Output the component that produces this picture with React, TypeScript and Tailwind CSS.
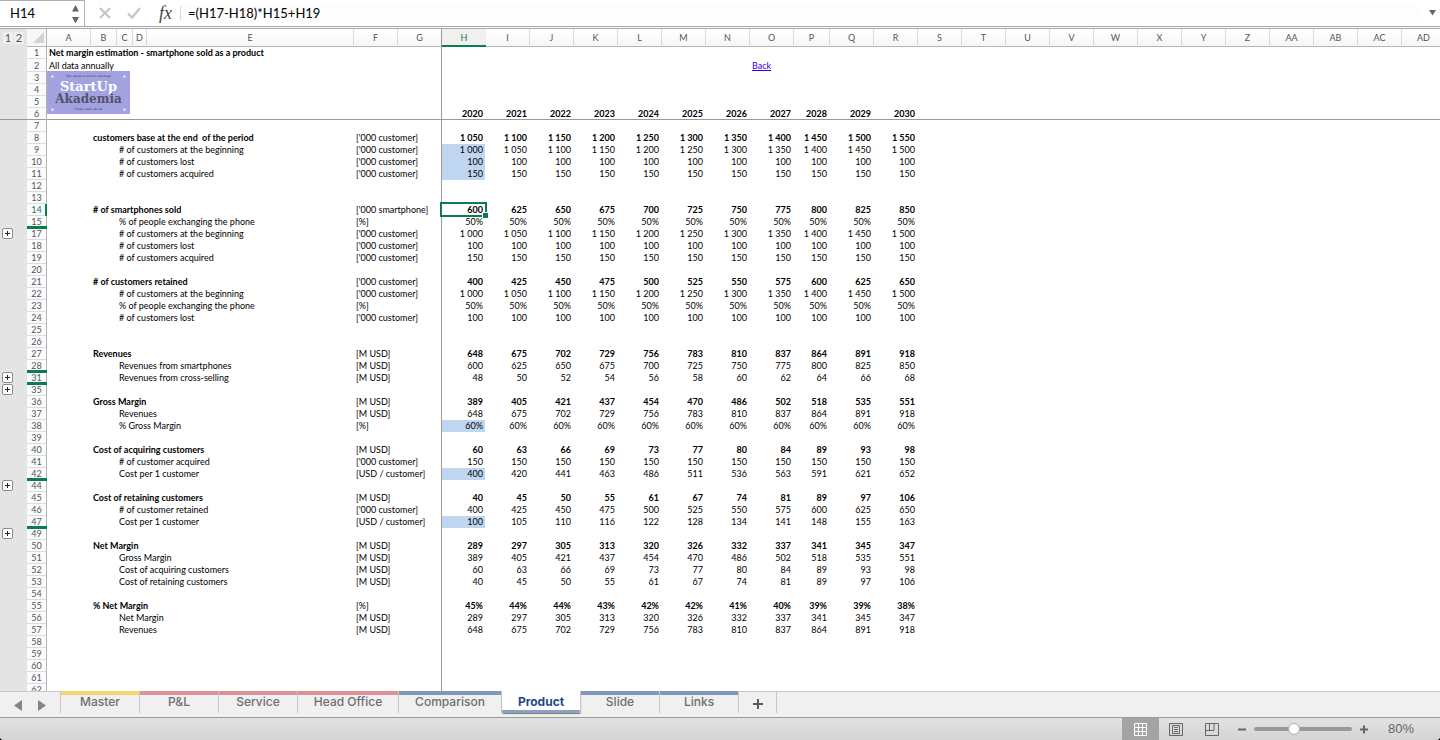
import React from "react";

type Col = { name: string; cls: string };

const COLS: Col[] = [
  { name: "A", cls: "w-[44px]" },
  { name: "B", cls: "w-[26px]" },
  { name: "C", cls: "w-[16px]" },
  { name: "D", cls: "w-[14px]" },
  { name: "E", cls: "w-[207px]" },
  { name: "F", cls: "w-[44px]" },
  { name: "G", cls: "w-[44px]" },
  ...["H", "I", "J", "K", "L", "M", "N", "O"].map((name) => ({ name, cls: "w-[44px]" })),
  { name: "P", cls: "w-[36px]" },
  ...["Q", "R", "S", "T", "U", "V", "W", "X", "Y", "Z", "AA", "AB", "AC", "AD"].map((name) => ({
    name,
    cls: "w-[44px]",
  })),
];

type Line = { label: string; unit: string; values: string[]; bold?: boolean; input?: boolean };

const list = (s: string) => s.split(",");
const BASE = list("1 050,1 100,1 150,1 200,1 250,1 300,1 350,1 400,1 450,1 500,1 550");
const START = list("1 000,1 050,1 100,1 150,1 200,1 250,1 300,1 350,1 400,1 450,1 500");
const same = (v: string) => Array<string>(11).fill(v);
const SOLD = list("600,625,650,675,700,725,750,775,800,825,850");
const RETAINED = list("400,425,450,475,500,525,550,575,600,625,650");
const REVENUES = list("648,675,702,729,756,783,810,837,864,891,918");
const GROSS = list("389,405,421,437,454,470,486,502,518,535,551");
const ACQ = list("60,63,66,69,73,77,80,84,89,93,98");
const RET = list("40,45,50,55,61,67,74,81,89,97,106");
const NET = list("289,297,305,313,320,326,332,337,341,345,347");

const CUST = "['000 customer]";
const MUSD = "[M USD]";
const PER = "[USD / customer]";

const LINES: Record<number, Line> = {
  6: { label: "", unit: "", values: list("2020,2021,2022,2023,2024,2025,2026,2027,2028,2029,2030"), bold: true },
  8: { label: "customers base at the end  of the period", unit: CUST, values: BASE, bold: true },
  9: { label: "# of customers at the beginning", unit: CUST, values: START, input: true },
  10: { label: "# of customers lost", unit: CUST, values: same("100"), input: true },
  11: { label: "# of customers acquired", unit: CUST, values: same("150"), input: true },
  14: { label: "# of smartphones sold", unit: "['000 smartphone]", values: SOLD, bold: true },
  15: { label: "% of people exchanging the phone", unit: "[%]", values: same("50%") },
  17: { label: "# of customers at the beginning", unit: CUST, values: START },
  18: { label: "# of customers lost", unit: CUST, values: same("100") },
  19: { label: "# of customers acquired", unit: CUST, values: same("150") },
  21: { label: "# of customers retained", unit: CUST, values: RETAINED, bold: true },
  22: { label: "# of customers at the beginning", unit: CUST, values: START },
  23: { label: "% of people exchanging the phone", unit: "[%]", values: same("50%") },
  24: { label: "# of customers lost", unit: CUST, values: same("100") },
  27: { label: "Revenues", unit: MUSD, values: REVENUES, bold: true },
  28: { label: "Revenues from smartphones", unit: MUSD, values: SOLD },
  31: { label: "Revenues from cross-selling", unit: MUSD, values: list("48,50,52,54,56,58,60,62,64,66,68") },
  36: { label: "Gross Margin", unit: MUSD, values: GROSS, bold: true },
  37: { label: "Revenues", unit: MUSD, values: REVENUES },
  38: { label: "% Gross Margin", unit: "[%]", values: same("60%"), input: true },
  40: { label: "Cost of acquiring customers", unit: MUSD, values: ACQ, bold: true },
  41: { label: "# of customer acquired", unit: CUST, values: same("150") },
  42: { label: "Cost per 1 customer", unit: PER, values: list("400,420,441,463,486,511,536,563,591,621,652"), input: true },
  45: { label: "Cost of retaining customers", unit: MUSD, values: RET, bold: true },
  46: { label: "# of customer retained", unit: CUST, values: RETAINED },
  47: { label: "Cost per 1 customer", unit: PER, values: list("100,105,110,116,122,128,134,141,148,155,163"), input: true },
  50: { label: "Net Margin", unit: MUSD, values: NET, bold: true },
  51: { label: "Gross Margin", unit: MUSD, values: GROSS },
  52: { label: "Cost of acquiring customers", unit: MUSD, values: ACQ },
  53: { label: "Cost of retaining customers", unit: MUSD, values: RET },
  55: { label: "% Net Margin", unit: "[%]", values: list("45%,44%,44%,43%,42%,42%,41%,40%,39%,39%,38%"), bold: true },
  56: { label: "Net Margin", unit: MUSD, values: NET },
  57: { label: "Revenues", unit: MUSD, values: REVENUES },
};

const HIDDEN = [16, 29, 30, 32, 33, 34, 43, 48];
const ROWS = Array.from({ length: 62 }, (_, i) => i + 1).filter((n) => !HIDDEN.includes(n));
const EXPANDERS = [17, 31, 35, 44, 49];

const FREEZE = "border-r border-[#999]";

function Logo() {
  return (
    <div className="absolute top-0 left-0 z-10 flex h-[43px] w-[83px] flex-col items-center bg-[#a3a2e0] text-center">
      <svg className="absolute inset-0 h-full w-full" viewBox="0 0 83 43" aria-hidden="true">
        <g fill="#e9e8fb">
          <circle cx="5.500" cy="5.500" r="1.200" />
          <circle cx="77.500" cy="5.500" r="1.200" />
          <circle cx="5.500" cy="38.500" r="1.200" />
          <circle cx="77.500" cy="38.500" r="1.200" />
        </g>
      </svg>
      <span className="mt-[3px] font-['DejaVu_Serif'] text-[3px] leading-[4px] font-bold text-[#5c5a80]">
        The must-read for startups
      </span>
      <span className="mt-[2px] font-['DejaVu_Serif'] text-[13px] leading-[13px] font-bold text-white">StartUp</span>
      <span className="font-['DejaVu_Serif'] text-[12px] leading-[12px] font-bold text-[#55536b]">Akademia</span>
      <span className="mt-[2px] font-['DejaVu_Serif'] text-[3px] leading-[4px] font-bold text-[#5c5a80]">
        Come and check
      </span>
    </div>
  );
}

function Gutter({ n }: { n: number }) {
  return (
    <td className={`relative bg-[#e4e4e4] ${n === 6 ? "shadow-[inset_0_-1px_#999]" : ""}`}>
      {EXPANDERS.includes(n) && (
        <button
          type="button"
          aria-label={`Expand rows above ${n}`}
          className="absolute top-0 left-[2px] flex h-[11px] w-[11px] items-center justify-center rounded-[2px] border border-[#8c8c8c] bg-white"
        >
          <svg width="7" height="7" viewBox="0 0 7 7" aria-hidden="true">
            <path d="M3 1h1v2h2v1H4v2H3V4H1V3h2z" fill="#222" />
          </svg>
        </button>
      )}
    </td>
  );
}

function RowHead({ n }: { n: number }) {
  const active = n === 14;
  const gap = HIDDEN.includes(n + 1);
  return (
    <th
      scope="row"
      className={`relative border-r border-[#b4b4b4] bg-[#fafbfc] text-center font-normal ${
        active ? "text-[#0b7d4b]" : "text-[#555]"
      }`}
    >
      <div
        className={`border-b ${n === 2 ? "h-[13px] leading-[13px]" : "h-[12px] leading-[12px]"} ${
          n === 6 ? "border-[#999]" : "border-[#dcdcdc]"
        }`}
      >
        {n}
      </div>
      {active && <span className="absolute top-0 -right-px h-[12px] w-[2px] bg-[#0b7d4b]" />}
      {gap && <span className="absolute -right-px -bottom-px left-0 z-10 h-[3px] bg-[#0b7d4b]" />}
    </th>
  );
}

function Row({ n }: { n: number }) {
  const line = LINES[n];
  const height = n === 2 ? "h-[13px]" : "h-[12px]";
  const edge = n === 6 ? "shadow-[inset_0_-1px_#999]" : "";
  if (n <= 2) {
    return (
      <tr className={height}>
        <Gutter n={n} />
        <RowHead n={n} />
        <td colSpan={7} className={`${FREEZE} pl-[2px] text-left ${n === 1 ? "font-bold" : ""}`}>
          {n === 1 ? "Net margin estimation - smartphone sold as a product" : "All data annually"}
        </td>
        <td colSpan={7} />
        <td colSpan={16} className="pl-[2px] text-left">
          {n === 2 && (
            <a href="#back" className="text-[#3300e6] underline">
              Back
            </a>
          )}
        </td>
      </tr>
    );
  }
  if (!line) {
    return (
      <tr className={height}>
        <Gutter n={n} />
        <RowHead n={n} />
        <td colSpan={7} className={`relative ${FREEZE}`}>
          {n === 3 && (
            <div className="absolute -top-px left-0">
              <Logo />
            </div>
          )}
        </td>
        <td colSpan={23} />
      </tr>
    );
  }
  return (
    <tr className={`${height} ${line.bold ? "font-bold" : ""}`}>
      <Gutter n={n} />
      <RowHead n={n} />
      <td colSpan={line.bold ? 1 : 2} className={edge} />
      <td colSpan={line.bold ? 4 : 3} className={`${edge} pl-[2px] text-left whitespace-pre`}>
        {line.label}
      </td>
      <td colSpan={2} className={`${edge} ${FREEZE} pl-[2px] text-left font-normal`}>
        {line.unit}
      </td>
      {line.values.map((v, i) => (
        <td
          key={i}
          className={`${edge} relative text-right ${
            line.input && i === 0 ? "border-r border-white bg-[#c0d5f0] pr-[2px]" : "pr-[3px]"
          }`}
        >
          {v}
          {n === 14 && i === 0 && (
            <span className="absolute -top-[2px] -right-px -bottom-px -left-[2px] border-2 border-[#0b7d4b]">
              <span className="absolute -right-[3px] -bottom-[3px] h-[6px] w-[6px] border-t border-l border-white bg-[#0b7d4b]" />
            </span>
          )}
        </td>
      ))}
      <td colSpan={12} className={edge} />
    </tr>
  );
}

function FormulaBar() {
  return (
    <header className="flex h-[27px] shrink-0 items-stretch border-b border-[#a6a6a6] bg-white font-['Lato',sans-serif] text-[13px] text-black">
      <div className="flex w-[85px] items-center border-t border-r border-[#b0b0b0] pr-[4px] pl-[10px]">
        <input aria-label="Name box" defaultValue="H14" className="w-0 flex-1 bg-transparent pt-px outline-none" />
        <svg width="9" height="20" viewBox="0 0 9 20" aria-hidden="true" fill="#666">
          <path d="M4.500 1 8 7.500H1zM4.500 19.500 1 13h7z" />
        </svg>
      </div>
      <div className="flex w-[95px] items-center">
        <button type="button" aria-label="Cancel" className="ml-[14px]">
          <svg width="12" height="12" viewBox="0 0 12 12" aria-hidden="true">
            <path d="M1 1l10 10M11 1 1 11" stroke="#c4c4c4" strokeWidth="2" fill="none" />
          </svg>
        </button>
        <button type="button" aria-label="Enter" className="ml-[16px]">
          <svg width="14" height="12" viewBox="0 0 14 12" aria-hidden="true">
            <path d="M1 6.500l4 4L13 1" stroke="#c4c4c4" strokeWidth="2.200" fill="none" />
          </svg>
        </button>
        <button
          type="button"
          aria-label="Insert function"
          className="ml-[18px] font-['Liberation_Serif',serif] text-[18px] leading-[20px] text-[#444] italic"
        >
          fx
        </button>
      </div>
      <div className="my-[6px] w-px bg-[#d8d8d8]" />
      <input
        aria-label="Formula"
        defaultValue="=(H17-H18)*H15+H19"
        className="mt-[5px] mb-[3px] w-0 flex-1 bg-[#fdfdfd] pl-[7px] outline-none"
      />
      <button type="button" aria-label="Expand formula bar" className="flex w-[22px] items-center justify-end pr-[4px]">
        <svg width="7" height="6" viewBox="0 0 7 6" aria-hidden="true">
          <path d="M0 0h7L3.500 5.500z" fill="#666" />
        </svg>
      </button>
    </header>
  );
}

const TABS = [
  { name: "Master", color: "bg-[#f6d473]", w: "w-[79px]" },
  { name: "P&L", color: "bg-[#dd9296]", w: "w-[79px]" },
  { name: "Service", color: "bg-[#dd9296]", w: "w-[79px]" },
  { name: "Head Office", color: "bg-[#dd9296]", w: "w-[101px]" },
  { name: "Comparison", color: "bg-[#8198b8]", w: "w-[103px]" },
  { name: "Product", color: "bg-[#8ba1c4]", w: "w-[79px]", active: true },
  { name: "Slide", color: "bg-[#8198b8]", w: "w-[79px]" },
  { name: "Links", color: "bg-[#8198b8]", w: "w-[79px]" },
];

function SheetTabs() {
  return (
    <nav
      aria-label="Sheets"
      className="flex h-[26px] shrink-0 items-start border-t border-[#c8c8c8] bg-[#f0f0f0] font-['Inter',sans-serif] text-[12px] font-medium text-[#6e6e6e]"
    >
      <div className="flex h-[21px] w-[61px] items-end gap-[16px] border-r border-[#c8c8c8] pb-[2px] pl-[14px]">
        <button type="button" aria-label="Previous sheet">
          <svg width="8" height="11" viewBox="0 0 8 11" aria-hidden="true">
            <path d="M8 0v11L0 5.500z" fill="#858585" />
          </svg>
        </button>
        <button type="button" aria-label="Next sheet">
          <svg width="8" height="11" viewBox="0 0 8 11" aria-hidden="true">
            <path d="M0 0v11l8-5.500z" fill="#858585" />
          </svg>
        </button>
      </div>
      {TABS.map((t) =>
        t.active ? (
          <button
            key={t.name}
            type="button"
            aria-current="page"
            className={`${t.w} -mt-px flex h-[22px] flex-col rounded-b-[2px] border-r border-[#c8c8c8] bg-white font-bold text-[#204a87] shadow-[0_1px_1px_#777]`}
          >
            <span className="flex h-[19px] w-full items-center justify-center pt-[2px]">{t.name}</span>
            <span className={`h-[3px] w-full rounded-b-[2px] ${t.color}`} />
          </button>
        ) : (
          <button
            key={t.name}
            type="button"
            className={`${t.w} -mt-px flex h-[22px] flex-col border-r border-[#c8c8c8]`}
          >
            <span className={`h-[4px] w-full ${t.color}`} />
            <span className="flex h-[14px] w-full items-center justify-center">{t.name}</span>
          </button>
        ),
      )}
      <button
        type="button"
        aria-label="Add sheet"
        className="flex h-[21px] w-[38px] items-center justify-center border-r border-[#c8c8c8] pt-[3px]"
      >
        <svg width="10" height="10" viewBox="0 0 10 10" aria-hidden="true">
          <path d="M4 0h2v4h4v2H6v4H4V6H0V4h4z" fill="#5c5c5c" />
        </svg>
      </button>
    </nav>
  );
}

function StatusBar() {
  return (
    <footer className="flex h-[23px] shrink-0 items-center justify-end border-t border-[#9a9a9a] bg-linear-to-b from-[#e2e2e2] to-[#d4d4d4] font-['Liberation_Sans',sans-serif] text-[13px] text-[#666]">
      <button
        type="button"
        aria-label="Normal view"
        className="flex h-full w-[37px] items-center justify-center bg-[#a3a3a3]"
      >
        <svg width="13" height="13" viewBox="0 0 13 13" aria-hidden="true">
          <path d="M.5.5h12v12H.5zM4.500 0v13M8.500 0v13M0 4.500h13M0 8.500h13" stroke="#fff" fill="none" />
        </svg>
      </button>
      <button type="button" aria-label="Page layout view" className="ml-[10px]">
        <svg width="14" height="13" viewBox="0 0 14 13" aria-hidden="true">
          <path d="M.5.5h13v12H.5zM3.500 2.500h7v8h-7zM5 4.500h4M5 6.500h4M5 8.500h4" stroke="#666" fill="none" />
        </svg>
      </button>
      <button type="button" aria-label="Page break view" className="ml-[22px]">
        <svg width="14" height="13" viewBox="0 0 14 13" aria-hidden="true">
          <path d="M.5.5h13v12H.5zM.5 7.500h8.500V.5M4.500.5v7" stroke="#666" fill="none" />
        </svg>
      </button>
      <button type="button" aria-label="Zoom out" className="ml-[19px]">
        <svg width="8" height="9" viewBox="0 0 8 9" aria-hidden="true">
          <path d="M0 3.500h8v2H0z" fill="#666" />
        </svg>
      </button>
      <input
        type="range"
        aria-label="Zoom"
        min={0}
        max={100}
        defaultValue={39}
        className="ml-[8px] h-[12px] w-[98px] appearance-none bg-transparent [&::-webkit-slider-runnable-track]:h-[4px] [&::-webkit-slider-runnable-track]:rounded-full [&::-webkit-slider-runnable-track]:bg-[#999] [&::-webkit-slider-thumb]:-mt-[4px] [&::-webkit-slider-thumb]:h-[12px] [&::-webkit-slider-thumb]:w-[12px] [&::-webkit-slider-thumb]:appearance-none [&::-webkit-slider-thumb]:rounded-full [&::-webkit-slider-thumb]:border [&::-webkit-slider-thumb]:border-[#aaa] [&::-webkit-slider-thumb]:bg-white"
      />
      <button type="button" aria-label="Zoom in" className="ml-[8px]">
        <svg width="8" height="9" viewBox="0 0 8 9" aria-hidden="true">
          <path d="M3 .5h2v3h3v2H5v3H3v-3H0v-2h3z" fill="#666" />
        </svg>
      </button>
      <output className="ml-[20px] w-[52px]">80%</output>
    </footer>
  );
}

export default function App() {
  return (
    <div className="h-screen bg-black">
      <div className="flex h-full flex-col overflow-hidden rounded-b-[4px] bg-white">
        <FormulaBar />
        <main className="mt-px min-h-0 flex-1 overflow-hidden border-t border-[#a6a6a6] font-['Lato',sans-serif] text-[9px] leading-[12px] text-black">
          <table className="w-[1446px] table-fixed border-separate border-spacing-0 whitespace-nowrap [&_td]:py-0 [&_th]:p-0">
            <colgroup>
              <col className="w-[27px]" />
              <col className="w-[20px]" />
              {COLS.map((c) => (
                <col key={c.name} className={c.cls} />
              ))}
            </colgroup>
            <thead>
              <tr className="h-[18px]">
                <td className="bg-[#e4e4e4]">
                  <div className="flex gap-px pl-[3px] text-[11px] text-[#555]">
                    <button type="button" className="w-[10px] bg-[#efefef]">
                      1
                    </button>
                    <button type="button" className="w-[10px] bg-[#efefef]">
                      2
                    </button>
                  </div>
                </td>
                <td className="border-r border-b border-[#b4b4b4] bg-[#f7f7f7]">
                  <svg className="ml-[6px]" width="11" height="11" viewBox="0 0 11 11" aria-hidden="true">
                    <path d="M11 0v11H0z" fill="#d2d2d2" />
                  </svg>
                </td>
                {COLS.map((c) => (
                  <th
                    key={c.name}
                    scope="col"
                    className={
                      c.name === "H"
                        ? "border-b border-[#0b7d4b] bg-[#f0f0f0] text-center font-normal text-[#0b7d4b] shadow-[inset_0_-1px_#0b7d4b]"
                        : c.name === "G"
                          ? "border-r border-b border-r-[#999] border-b-[#b4b4b4] bg-linear-to-b from-white to-[#f6f6f6] text-center font-normal text-[#555]"
                          : "border-r border-b border-r-[#dadada] border-b-[#b4b4b4] bg-linear-to-b from-white to-[#f6f6f6] text-center font-normal text-[#555]"
                    }
                  >
                    {c.name}
                  </th>
                ))}
              </tr>
            </thead>
            <tbody>
              {ROWS.map((n) => (
                <Row key={n} n={n} />
              ))}
            </tbody>
          </table>
        </main>
        <SheetTabs />
        <StatusBar />
      </div>
    </div>
  );
}
